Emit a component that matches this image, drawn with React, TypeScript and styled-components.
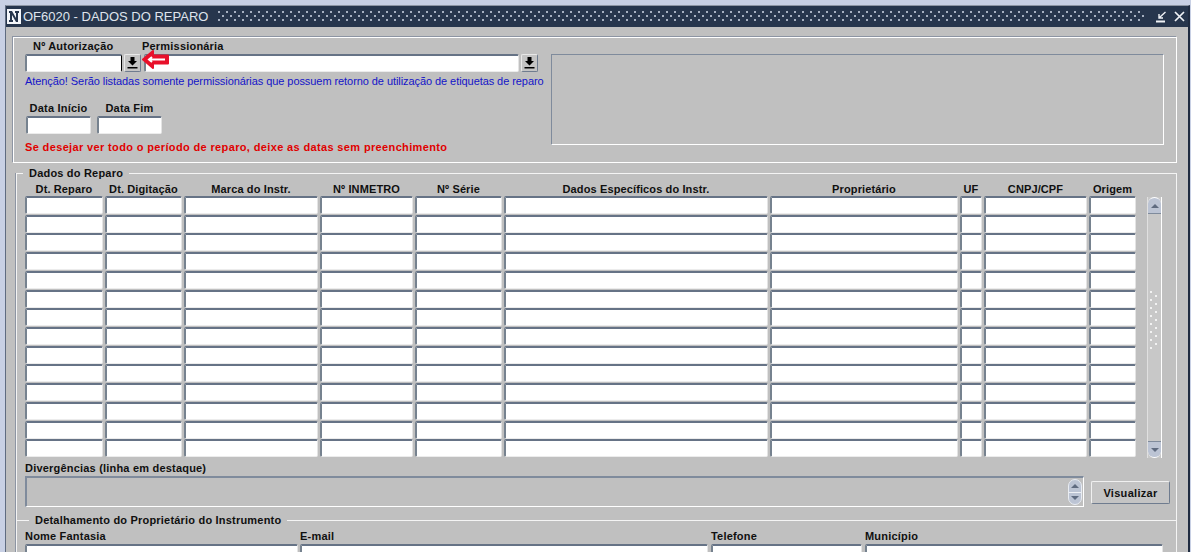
import React from 'react'
import styled, { createGlobalStyle } from 'styled-components'

const GlobalStyle = createGlobalStyle`
  html, body {
    margin: 0;
    padding: 0;
    background: #c8d0e4;
  }
  body {
    font-family: "Liberation Sans", Arial, sans-serif;
    font-size: 11px;
    color: #000;
  }
  #root {
    height: 552px;
    overflow: hidden;
  }
`

const Frame = styled.div`
  box-sizing: border-box;
  width: 1191px;
  height: 552px;
  padding: 5px 1px 0 5px;
  overflow: hidden;
`
const Window = styled.div`
  box-sizing: border-box;
  height: 547px;
  background: #c0c0c0;
  border-top: 1px solid #8d95a3;
  border-left: 1px solid #5f6b80;
  border-right: 2px solid #1f2b40;
`
const TitleBar = styled.div`
  height: 21px;
  display: flex;
  align-items: center;
  background: #27364d;
  padding: 0 3px 0 1px;
  gap: 2px;
`
const TitleText = styled.div`
  font-size: 13px;
  color: #dfe4ec;
  white-space: nowrap;
`
const TitlePattern = styled.div`
  flex: 1;
  height: 12px;
  margin: 0 9px 0 8px;
  background-image:
    radial-gradient(circle at 1px 1px, #aab4c4 0.7px, transparent 1px),
    radial-gradient(circle at 5px 5px, #aab4c4 0.7px, transparent 1px);
  background-size: 8px 8px;
`
const TitleButtons = styled.div`
  display: flex;
  align-items: center;
  gap: 6px;
`
const Content = styled.div`
  padding: 10px 11px 0 7px;
`
const FilterPanel = styled.div`
  box-sizing: border-box;
  height: 126px;
  display: flex;
  padding: 2px 12px 0 11px;
  border: 1px solid #fff;
  box-shadow: -1px -1px 0 #8d95a3;
`
const FilterColumn = styled.div`
  width: 526px;
  flex: none;
`
const FilterRow = styled.div`
  display: flex;
`
const FieldGroup = styled.div<{ $width: number }>`
  width: ${p => p.$width}px;
  flex: none;
  position: relative;
`
const Label = styled.div<{ $indent?: number; $center?: boolean }>`
  height: 12px;
  line-height: 12px;
  margin-bottom: 2px;
  padding-left: ${p => p.$indent || 0}px;
  font-weight: bold;
  letter-spacing: 0.2px;
  white-space: nowrap;
  text-align: ${p => (p.$center ? 'center' : 'left')};
  color: #101010;
`
const FieldWithLov = styled.div<{ $indent?: number }>`
  display: flex;
  align-items: flex-start;
  padding-left: ${p => p.$indent || 0}px;
`
const Field = styled.input<{ $width?: number; $height?: number; $caret?: boolean }>`
  box-sizing: border-box;
  display: block;
  width: ${p => (p.$width ? `${p.$width}px` : '100%')};
  height: ${p => p.$height || 18}px;
  margin: 0;
  padding: 0;
  background: #fff;
  border-style: solid;
  border-width: 2px 1px 1px 2px;
  border-color: #667386 #e4e4e4 #ececec #76828f;
  border-radius: 2px;
  outline: none;
  ${p => p.$caret && 'border-right: 1px solid #000;'}
`
const LovButton = styled.button`
  box-sizing: border-box;
  width: 17px;
  height: 18px;
  margin: 0 0 0 2px;
  padding: 0;
  display: flex;
  align-items: center;
  justify-content: center;
  background: #c4c4c4;
  border: 1px solid;
  border-color: #e8e8e8 #6f7c8f #6f7c8f #e8e8e8;
  border-radius: 2px;
`
const RedArrow = styled.svg`
  position: absolute;
  left: -1px;
  top: 9px;
`
const Notice = styled.div`
  margin-top: 3px;
  height: 12px;
  line-height: 12px;
  color: #1414c8;
  letter-spacing: -0.07px;
  white-space: nowrap;
`
const DateRow = styled.div`
  display: flex;
  gap: 6px;
  margin: 15px 0 0 1px;
`
const Warning = styled.div`
  margin-top: 7px;
  height: 12px;
  line-height: 12px;
  color: #e00000;
  font-weight: bold;
  letter-spacing: 0.36px;
  white-space: nowrap;
`
const InsetBox = styled.div`
  box-sizing: border-box;
  flex: 1;
  height: 91px;
  margin-top: 14px;
  border-style: solid;
  border-width: 1px;
  border-color: #7f8b9c #fff #fff #7f8b9c;
`
const Section = styled.div<{ $height?: number }>`
  box-sizing: border-box;
  ${p => p.$height && `height: ${p.$height}px;`}
  margin-left: 3px;
  padding: 0 5px 0 8px;
  border-top: 1px solid #f4f4f4;
  border-left: 1px solid #f4f4f4;
  border-right: 1px solid #f4f4f4;
  box-shadow: -1px 0 0 #8d95a3;
`
const SectionTitle = styled.div<{ $indent: number }>`
  width: fit-content;
  height: 12px;
  line-height: 12px;
  margin: -7px 0 0 ${p => p.$indent}px;
  padding: 0 6px;
  background: #c0c0c0;
  font-weight: bold;
  letter-spacing: 0.2px;
  white-space: nowrap;
  color: #101010;
`
const RepairSection = styled(Section)`
  margin-top: 10px;
`
const TableArea = styled.div`
  display: flex;
  margin-top: 4px;
`
const Grid = styled.div`
  display: grid;
  grid-template-columns: 80px 79px 136px 95px 89px 266px 190px 24px 105px 49px;
  grid-auto-rows: 18.72px;
`
const HeaderRow = styled.div`
  display: grid;
  grid-template-columns: 80px 79px 136px 95px 89px 266px 190px 24px 105px 49px;
  height: 13px;
`
const HeaderCell = styled.div`
  padding-right: 2px;
  line-height: 12px;
  font-weight: bold;
  letter-spacing: 0.12px;
  text-align: center;
  white-space: nowrap;
  color: #101010;
`
const CellField = styled(Field)`
  width: calc(100% - 2px);
  height: 18px;
`
const Scrollbar = styled.div`
  box-sizing: border-box;
  width: 15px;
  height: 261px;
  margin: 14px 0 0 9px;
  display: flex;
  flex-direction: column;
  background: #c8c8c8;
  border-left: 1px solid #e0e0e0;
  border-right: 1px solid #fff;
`
const ScrollCap = styled.div<{ $down?: boolean }>`
  height: 15px;
  flex: none;
  display: flex;
  align-items: center;
  justify-content: center;
  background: #bcc4d4;
  border-radius: ${p => (p.$down ? '0 0 7px 7px' : '7px 7px 0 0')};
  border-top: ${p => (p.$down ? '1px solid #7f8b9c' : '1px solid #fff')};
  border-bottom: ${p => (p.$down ? '1px solid #fff' : '1px solid #7f8b9c')};
`
const ScrollTrack = styled.div`
  flex: 1;
  display: flex;
  align-items: center;
  justify-content: center;
`
const Grip = styled.div`
  width: 9px;
  height: 60px;
  margin-top: -14px;
  background-image:
    radial-gradient(circle at 1px 1px, #f2f2f2 0.9px, transparent 1.1px),
    radial-gradient(circle at 6px 5px, #f2f2f2 0.9px, transparent 1.1px);
  background-size: 9px 8px;
`
const Triangle = styled.div<{ $down?: boolean }>`
  width: 0;
  height: 0;
  border-left: 4px solid transparent;
  border-right: 4px solid transparent;
  ${p => (p.$down ? 'border-top: 4px solid #5f6b80;' : 'border-bottom: 4px solid #5f6b80;')}
`
const DivergenceLabel = styled(Label)`
  margin: 4px 0 2px;
`
const DivergenceRow = styled.div`
  display: flex;
  align-items: center;
`
const DivergenceBox = styled.div`
  box-sizing: border-box;
  width: 1059px;
  height: 31px;
  padding-right: 1px;
  display: flex;
  justify-content: flex-end;
  align-items: center;
  border-style: solid;
  border-width: 2px 1px 1px 2px;
  border-color: #7f8b9c #fff #fff #7f8b9c;
`
const Spinner = styled.div`
  box-sizing: border-box;
  width: 14px;
  height: 26px;
  display: flex;
  flex-direction: column;
  border: 1px solid #e8ecf2;
  border-radius: 7px;
  background: #bcc4d4;
  overflow: hidden;
`
const SpinnerPart = styled.div`
  flex: 1;
  display: flex;
  align-items: center;
  justify-content: center;
  & + & {
    border-top: 1px solid #eef0f4;
  }
`
const ActionButton = styled.button`
  box-sizing: border-box;
  width: 79px;
  height: 23px;
  margin: 2px 0 0 7px;
  padding: 0;
  background: #c4c4c4;
  border: 1px solid;
  border-color: #f0f0f0 #6f7c8f #6f7c8f #f0f0f0;
  border-radius: 2px;
  font-family: inherit;
  font-size: 11px;
  font-weight: bold;
  letter-spacing: 0.3px;
  color: #101010;
`
const OwnerRow = styled.div`
  display: grid;
  grid-template-columns: 275px 411px 154px 298px;
  margin-top: 4px;
`

const columns = [
  'Dt. Reparo',
  'Dt. Digitação',
  'Marca do Instr.',
  'Nº INMETRO',
  'Nº Série',
  'Dados Específicos do Instr.',
  'Proprietário',
  'UF',
  'CNPJ/CPF',
  'Origem',
]

const owners = [
  { label: 'Nome Fantasia', width: 273 },
  { label: 'E-mail', width: 408 },
  { label: 'Telefone', width: 151 },
  { label: 'Município', width: 298 },
]

const LovIcon = () => (
  <svg width="11" height="12" viewBox="0 0 11 12">
    <path d="M3.5 0h4v4H10L5.5 8.5 1 4h2.500z" fill="#000" />
    <rect x="0.500" y="10" width="10" height="1.500" fill="#000" />
  </svg>
)

const App: React.FC = () => {
  return (
    <Frame>
      <GlobalStyle />
      <Window>
        <TitleBar>
          <svg width="14" height="15" viewBox="0 0 14 15">
            <rect width="14" height="15" fill="#f4f6fa" />
            <path d="M2 2h3l4 7V4H8V2h4v2h-1v9H9L5 6v5h1v2H2v-2h1V4H2z" fill="#27364d" />
          </svg>
          <TitleText>OF6020 - DADOS DO REPARO</TitleText>
          <TitlePattern />
          <TitleButtons>
            <svg width="12" height="12" viewBox="0 0 12 12" fill="none" stroke="#f0f2f6">
              <path d="M9.500 1 3.500 6.500M3 3v4h4" strokeWidth="1.400" />
              <path d="M0 10.500h9" strokeWidth="2" />
            </svg>
            <svg width="11" height="11" viewBox="0 0 11 11" fill="none" stroke="#f0f2f6" strokeWidth="1.700">
              <path d="M1 1l9 9M10 1l-9 9" />
            </svg>
          </TitleButtons>
        </TitleBar>
        <Content>
          <FilterPanel>
            <FilterColumn>
              <FilterRow>
                <FieldGroup $width={117}>
                  <Label $indent={8}>Nº Autorização</Label>
                  <FieldWithLov>
                    <Field $width={97} $caret />
                    <LovButton aria-label="Lista"><LovIcon /></LovButton>
                  </FieldWithLov>
                </FieldGroup>
                <FieldGroup $width={400}>
                  <Label>Permissionária</Label>
                  <FieldWithLov $indent={2}>
                    <Field $width={375} />
                    <LovButton aria-label="Lista"><LovIcon /></LovButton>
                  </FieldWithLov>
                  <RedArrow width="29" height="21" viewBox="0 0 29 21">
                    <path d="M2 10.500 12 2v4.500h15v8H12V19z" fill="#e8102a" stroke="#e8102a" strokeWidth="2" strokeLinejoin="round" />
                    <path d="M8 10.500h16M11 8l-3 2.500 3 2.500" stroke="#fff" strokeWidth="2" fill="none" />
                  </RedArrow>
                </FieldGroup>
              </FilterRow>
              <Notice>Atenção! Serão listadas somente permissionárias que possuem retorno de utilização de etiquetas de reparo</Notice>
              <DateRow>
                <FieldGroup $width={65}>
                  <Label $center>Data Início</Label>
                  <Field $height={18} />
                </FieldGroup>
                <FieldGroup $width={65}>
                  <Label $center>Data Fim</Label>
                  <Field $height={18} />
                </FieldGroup>
              </DateRow>
              <Warning>Se desejar ver todo o período de reparo, deixe as datas sem preenchimento</Warning>
            </FilterColumn>
            <InsetBox />
          </FilterPanel>

          <RepairSection $height={347}>
            <SectionTitle $indent={-2}>Dados do Reparo</SectionTitle>
            <TableArea>
              <div>
                <HeaderRow>
                  {columns.map(c => <HeaderCell key={c}>{c}</HeaderCell>)}
                </HeaderRow>
                <Grid>
                  {Array.from({ length: 14 * columns.length }, (_, i) => <CellField key={i} />)}
                </Grid>
              </div>
              <Scrollbar>
                <ScrollCap><Triangle /></ScrollCap>
                <ScrollTrack><Grip /></ScrollTrack>
                <ScrollCap $down><Triangle $down /></ScrollCap>
              </Scrollbar>
            </TableArea>
            <DivergenceLabel>Divergências (linha em destaque)</DivergenceLabel>
            <DivergenceRow>
              <DivergenceBox>
                <Spinner>
                  <SpinnerPart><Triangle /></SpinnerPart>
                  <SpinnerPart><Triangle $down /></SpinnerPart>
                </Spinner>
              </DivergenceBox>
              <ActionButton>Visualizar</ActionButton>
            </DivergenceRow>
          </RepairSection>

          <Section>
            <SectionTitle $indent={4}>Detalhamento do Proprietário do Instrumento</SectionTitle>
            <OwnerRow>
              {owners.map(o => (
                <div key={o.label}>
                  <Label>{o.label}</Label>
                  <Field $width={o.width} />
                </div>
              ))}
            </OwnerRow>
          </Section>
        </Content>
      </Window>
    </Frame>
  )
}

export default App
